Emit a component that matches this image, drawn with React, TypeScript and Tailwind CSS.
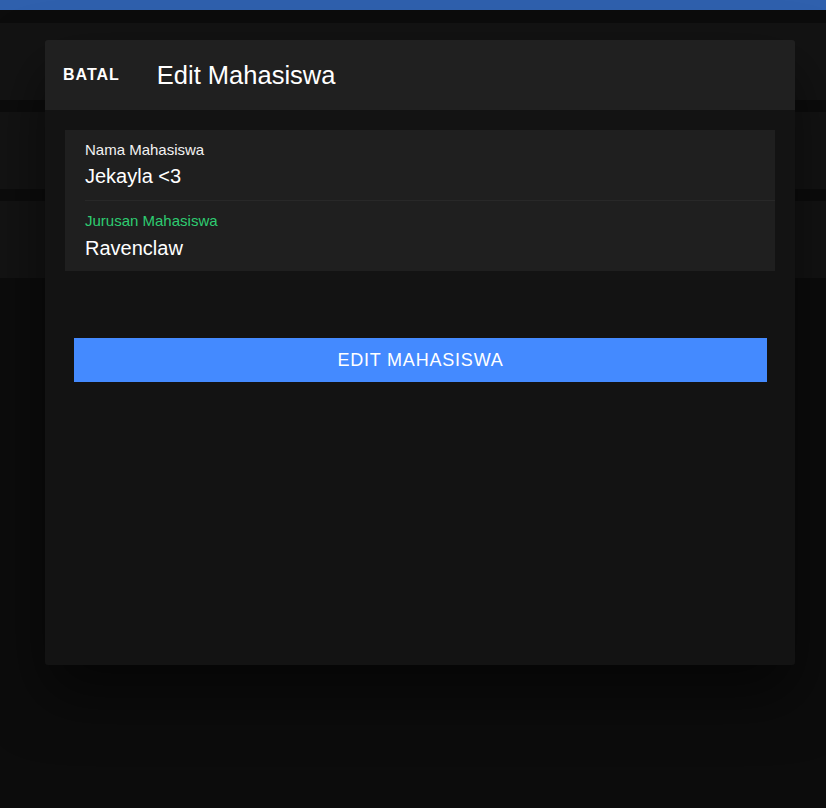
import React from 'react';

const font = { fontFamily: '"Liberation Sans", Arial, sans-serif' };

const BackgroundRow = () => <div className="h-[77px] bg-[#131313]" />;

const Field = ({ label, value, active, last }: { label: string; value: string; active?: boolean; last?: boolean }) => (
    <div className={`ml-5 pr-5 pt-[10px] ${last ? 'pb-[11px]' : 'pb-[12px] border-b border-[#282828]'}`}>
        <div className={`text-[15px] leading-[20px] ${active ? 'text-[#2ecc71]' : 'text-[#f2f2f2]'}`}>{label}</div>
        <div className={`${last ? 'mt-[5px]' : 'mt-[4px]'} text-[20px] leading-[24px] text-white`}>{value}</div>
    </div>
);

export default function App() {
    return (
        <div className="relative min-h-[808px] bg-[#0c0c0c]" style={font}>
            <div className="h-[10px] bg-[#2f60ad]" />
            <div className="mt-[13px] flex flex-col gap-[12px]">
                <BackgroundRow />
                <BackgroundRow />
                <BackgroundRow />
            </div>

            {/* modal */}
            <div className="absolute left-[45px] top-[40px] w-[750px] h-[625px] rounded-[3px] bg-[#131313] shadow-[0_30px_60px_rgba(0,0,0,0.55)] flex flex-col">
                <div className="h-[70px] bg-[#202020] rounded-t-[3px] flex items-center">
                    <button className="ml-[18px] text-[16px] font-bold text-white tracking-[1px]">BATAL</button>
                    <h1 className="ml-[37px] text-[25.5px] text-white">Edit Mahasiswa</h1>
                </div>
                <div className="px-5 pt-5">
                    <div className="bg-[#1f1f1f]">
                        <Field label="Nama Mahasiswa" value="Jekayla <3" />
                        <Field label="Jurusan Mahasiswa" value="Ravenclaw" active last />
                    </div>
                    <button className="mt-[67px] mx-[9px] w-[693px] h-[44px] bg-[#448aff] text-white text-[18px] tracking-[0.8px]">
                        EDIT MAHASISWA
                    </button>
                </div>
            </div>
        </div>
    );
}
